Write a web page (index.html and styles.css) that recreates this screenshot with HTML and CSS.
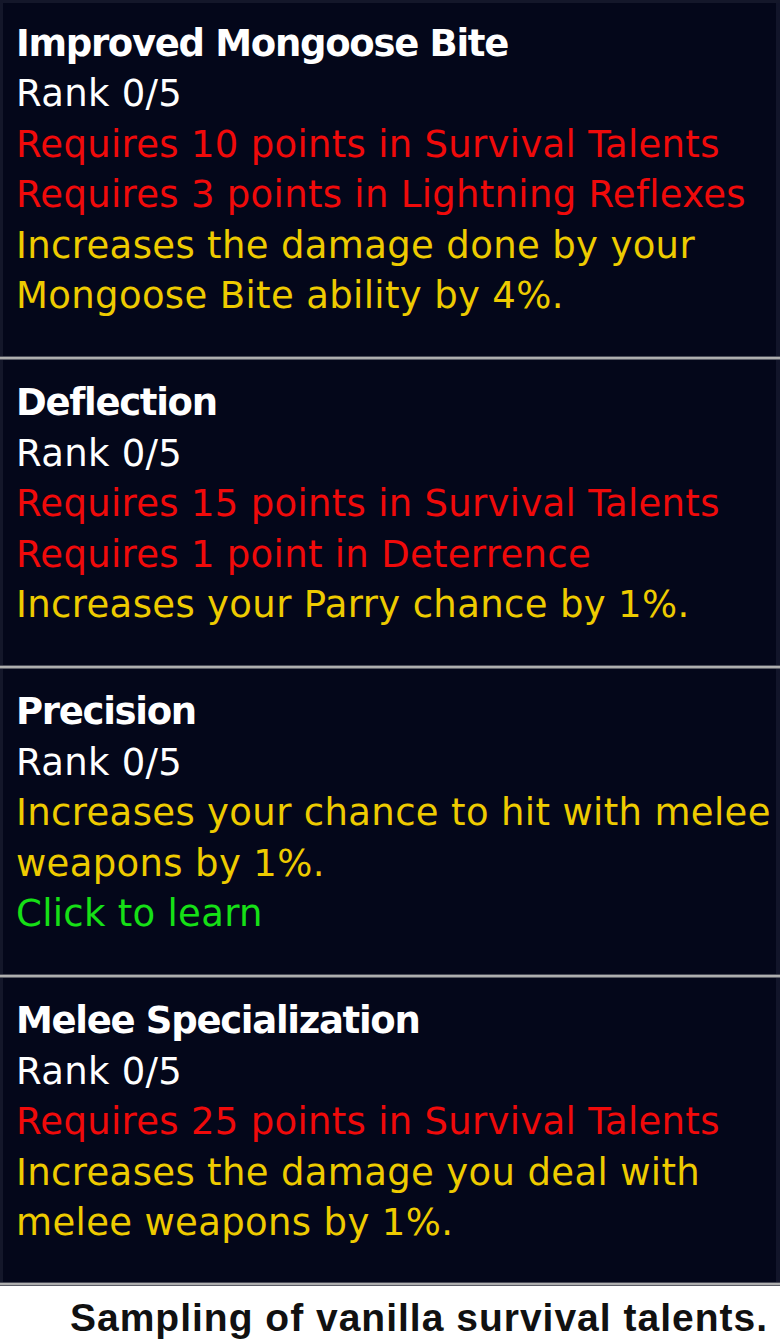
FILE: index.html
```html
<!DOCTYPE html>
<html lang="en">
<head>
<meta charset="utf-8">
<title>Sampling of vanilla survival talents</title>
<link rel="stylesheet" href="styles.css">
</head>
<body>
<div class="figure">
  <div class="tooltips">
    <div class="talent">
      <div class="name">Improved Mongoose Bite</div>
      <div class="rank">Rank 0/5</div>
      <div class="req">Requires 10 points in Survival Talents</div>
      <div class="req">Requires 3 points in Lightning Reflexes</div>
      <div class="desc">Increases the damage done by your Mongoose Bite ability by 4%.</div>
    </div>
    <div class="sep"></div>
    <div class="talent">
      <div class="name">Deflection</div>
      <div class="rank">Rank 0/5</div>
      <div class="req">Requires 15 points in Survival Talents</div>
      <div class="req">Requires 1 point in Deterrence</div>
      <div class="desc">Increases your Parry chance by 1%.</div>
    </div>
    <div class="sep"></div>
    <div class="talent">
      <div class="name">Precision</div>
      <div class="rank">Rank 0/5</div>
      <div class="desc">Increases your chance to hit with melee weapons by 1%.</div>
      <div class="learn">Click to learn</div>
    </div>
    <div class="sep"></div>
    <div class="talent">
      <div class="name">Melee Specialization</div>
      <div class="rank">Rank 0/5</div>
      <div class="req">Requires 25 points in Survival Talents</div>
      <div class="desc">Increases the damage you deal with melee weapons by 1%.</div>
    </div>
    <div class="sep"></div>
  </div>
  <div class="caption">Sampling of vanilla survival talents.</div>
</div>
</body>
</html>
```

FILE: styles.css
```css
html, body {
  margin: 0;
  padding: 0;
  background: #ffffff;
}

.figure {
  width: 780px;
  height: 1341px;
  display: flex;
  flex-direction: column;
  overflow: hidden;
}

.tooltips {
  background: #04071a;
  box-shadow: inset 3px 3px 0 #14172a, inset -4px 0 0 #12152a;
  font-family: "DejaVu Sans", Verdana, sans-serif;
  font-size: 37px;
  line-height: 50.6px;
}

.talent {
  padding: 18.5px 4px 33.5px 16px;
}

.name {
  color: #ffffff;
  font-weight: bold;
  letter-spacing: -1.3px;
}

.rank {
  color: #ffffff;
  letter-spacing: 0.3px;
}

.req {
  color: #f00a0a;
  letter-spacing: 0.3px;
}

.desc {
  color: #eecb00;
  letter-spacing: 0.35px;
}

.learn {
  color: #16e016;
  letter-spacing: 0.3px;
}

.sep {
  height: 4px;
  background: linear-gradient(#4a4c58 0, #4a4c58 1px, #b4b4b4 1px, #a8a8a8 3px, #5a5c66 3px);
}

.caption {
  flex: 1;
  display: flex;
  align-items: center;
  justify-content: flex-end;
  padding-right: 12px;
  padding-top: 8px;
  font-family: "Liberation Sans", Arial, sans-serif;
  font-weight: bold;
  font-size: 39px;
  letter-spacing: 1px;
  color: #111111;
}
```
